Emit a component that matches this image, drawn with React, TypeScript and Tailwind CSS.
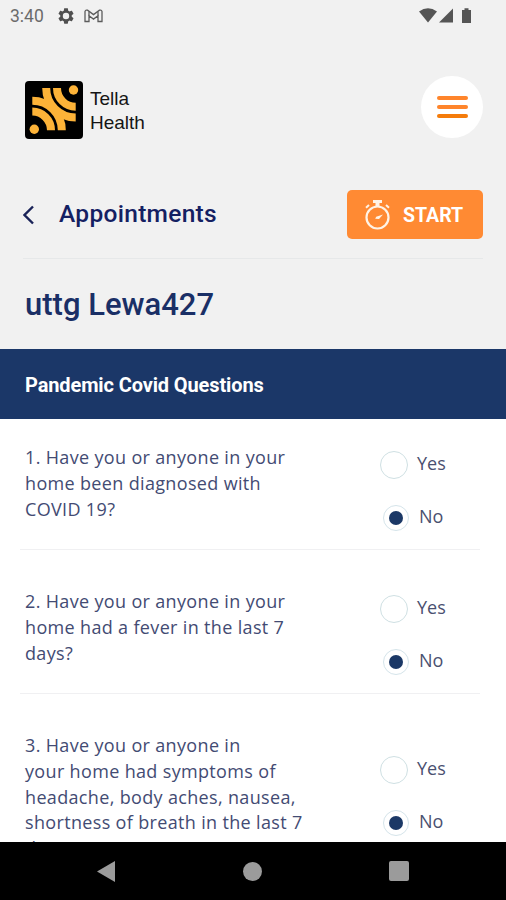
import { useState } from "react";

interface Question {
    id: number;
    lines: string[];
    answersOffset: string;
    height: string;
}

const questions: Question[] = [
    {
        id: 1,
        lines: ["1. Have you or anyone in your", "home been diagnosed with", "COVID 19?"],
        answersOffset: "pt-[31px]",
        height: "h-[131px]"
    },
    {
        id: 2,
        lines: ["2. Have you or anyone in your", "home had a fever in the last 7", "days?"],
        answersOffset: "pt-[44px]",
        height: "h-[144px]"
    },
    {
        id: 3,
        lines: [
            "3. Have you or anyone in",
            "your home had symptoms of",
            "headache, body aches, nausea,",
            "shortness of breath in the last 7",
            "days?"
        ],
        answersOffset: "pt-[61px]",
        height: "h-[220px]"
    }
];

function StatusBar() {
    return (
        <div className="flex h-8 shrink-0 items-center justify-between pl-[10px] pr-[33px] text-[#6b6b6b]">
            <div className="flex items-center">
                <span className="w-[48px] pt-px text-[17.5px] leading-none">3:40</span>
                <svg width="16" height="16" viewBox="2 2 20 20" fill="#505050">
                    <path
                        fillRule="evenodd"
                        d="M19.14 12.94c.04-.3.06-.61.06-.94s-.02-.64-.07-.94l2.03-1.58c.18-.14.23-.41.12-.61l-1.92-3.32c-.12-.22-.37-.29-.59-.22l-2.39.96c-.5-.38-1.03-.7-1.62-.94l-.36-2.54c-.04-.24-.24-.41-.48-.41h-3.84c-.24 0-.43.17-.47.41l-.36 2.54c-.59.24-1.13.57-1.62.94l-2.39-.96c-.22-.08-.47 0-.59.22L2.74 8.87c-.12.21-.08.47.12.61l2.03 1.58c-.05.3-.09.63-.09.94s.02.64.07.94l-2.03 1.58c-.18.14-.23.41-.12.61l1.92 3.32c.12.22.37.29.59.22l2.39-.96c.5.38 1.03.7 1.62.94l.36 2.54c.05.24.24.41.48.41h3.84c.24 0 .44-.17.47-.41l.36-2.54c.59-.24 1.13-.56 1.62-.94l2.39.96c.22.08.47 0 .59-.22l1.92-3.32c.12-.22.07-.47-.12-.61zM12 16a4 4 0 1 1 0-8 4 4 0 0 1 0 8z"
                    />
                </svg>
                <svg className="ml-[10px]" width="19" height="14" viewBox="0 0 19 14" fill="none" stroke="#5c5c5c" strokeWidth="1.3">
                    <path d="M1 12.5V2.500Q1.500.6 3.500 1.200L9.500 5.600l6-4.400Q17.500.6 18 2.500v10h-4V6.700l-4.500 3.400L5 6.700v5.800Z" />
                    <path d="M5 2.500V6.700M14 2.500V6.700" />
                </svg>
            </div>
            <svg width="54" height="16" viewBox="0 0 54 16" fill="#555">
                <path d="M0 3.4Q9 -3 18 3.4L9 14.5Z" />
                <path d="M20 14.5L34 .5v14Z" />
                <path d="M43 2h2.5V.3h4V2H52v13h-9Z" />
            </svg>
        </div>
    );
}

function Logo() {
    return (
        <div className="flex items-center gap-[7px]">
            <svg width="58" height="58" viewBox="0 0 58 58" fill="none">
                <rect width="58" height="58" rx="4" fill="#000" />
                <g stroke="#fdb338" strokeWidth="8">
                    <path d="M32 7A18.7 18.7 0 0 0 50.7 25.7" />
                    <path d="M21.200 7A29.500 29.500 0 0 0 50.700 36.500" />
                    <path d="M7.300 30.600A18.700 18.700 0 0 1 26 49.300" />
                    <path d="M7.300 19.800A29.500 29.500 0 0 1 36.800 49.300" />
                </g>
                <circle cx="48.5" cy="9" r="4.7" fill="#fdb338" />
                <circle cx="9.3" cy="48.3" r="4.7" fill="#fdb338" />
            </svg>
            <div className="pt-[2px] font-['Liberation_Sans'] text-[19px] leading-[24px] text-[#151515]">
                <div>Tella</div>
                <div>Health</div>
            </div>
        </div>
    );
}

function StopwatchIcon() {
    return (
        <svg width="26" height="32" viewBox="0 0 26 32" fill="none" stroke="#fff3e6">
            <circle cx="13.500" cy="18.500" r="11" strokeWidth="2.200" />
            <path d="M9 2.500h9" strokeWidth="3" />
            <path d="M13.500 3v5" strokeWidth="4" />
            <path d="M2 8.800L5 6M22 6l3 2.800" strokeWidth="2" />
            <path d="M19 15.500l-4 4.500-3.800-.2 1-2Z" fill="#fff3e6" stroke="none" />
        </svg>
    );
}

interface AnswerProps {
    label: string;
    checked: boolean;
    onSelect: () => void;
}

function Answer({ label, checked, onSelect }: AnswerProps) {
    return (
        <button
            type="button"
            role="radio"
            aria-checked={checked}
            onClick={onSelect}
            className="flex h-7 items-center text-[18px] text-[#4a5070]"
        >
            {checked ? (
                <span className="ml-[3px] mr-[10px] mt-[2px] flex size-[26px] items-center justify-center rounded-full border border-[#d5e4ea]">
                    <span className="size-[14px] rounded-full bg-[#1b3866]" />
                </span>
            ) : (
                <span className="mr-[9px] mt-px size-[28px] rounded-full border border-[#cfe0e3]" />
            )}
            <span className="pb-[2px] leading-[26px]">{label}</span>
        </button>
    );
}

export default function App() {
    const [answers, setAnswers] = useState<Record<number, string>>({ 1: "No", 2: "No", 3: "No" });

    return (
        <div className="flex h-[900px] w-[506px] flex-col overflow-hidden bg-[#f1f1f1] font-[Roboto,sans-serif]">
            <StatusBar />

            <header className="flex shrink-0 justify-between pl-[25px] pr-[23px] pt-[44px]">
                <div className="pt-[5px]">
                    <Logo />
                </div>
                <button type="button" aria-label="Menu" className="flex size-[62px] flex-col items-center justify-center gap-[5px] rounded-full bg-white">
                    <span className="h-[4px] w-[31px] rounded-full bg-[#ff852b]" />
                    <span className="h-[4px] w-[31px] rounded-full bg-[#ff852b]" />
                    <span className="h-[4px] w-[31px] rounded-full bg-[#f57c0b]" />
                </button>
            </header>

            <div className="mx-[23px] mt-[51px] flex h-[69px] shrink-0 items-start justify-between border-b border-[#e6e8e9]">
                <div className="flex h-[49px] items-center">
                    <svg width="12" height="20" viewBox="0 0 12 20" fill="none" stroke="#1a2358" strokeWidth="2.4">
                        <path d="M10 1.5L1.5 10l8.5 8.5" />
                    </svg>
                    <h1 className="ml-[24px] pb-px text-[24.5px] font-medium tracking-[0.3px] text-[#142062]">Appointments</h1>
                </div>
                <button type="button" className="flex h-[49px] w-[136px] items-center rounded-[5px] bg-[#ff8a33] pl-[17px] text-[19.5px] font-bold text-white">
                    <StopwatchIcon />
                    <span className="ml-[13px] pt-[2px]">START</span>
                </button>
            </div>

            <h2 className="flex h-[90px] shrink-0 items-center pl-[25px] pt-[3px] text-[31px] font-medium text-[#1a2f66]">
                uttg Lewa427
            </h2>

            <div className="flex h-[70px] shrink-0 items-center bg-[#1b3768] pl-[25px] pt-[2px] text-[20px] font-bold tracking-[-0.12px] text-white">
                Pandemic Covid Questions
            </div>

            <main className="min-h-0 flex-1 overflow-hidden bg-white pl-[20px] pr-[26px] font-['Open_Sans',sans-serif]">
                {questions.map((q, i) => (
                    <section key={q.id} className={`flex justify-between border-b border-[#f0f0f2] pl-[5px] ${q.height}`}>
                        <div className={`whitespace-nowrap text-[18px] leading-[25.8px] tracking-[0.34px] text-[#434b73] ${i === 0 ? "pt-[26px]" : "pt-[39px]"}`}>
                            {q.lines.map((line) => (
                                <div key={line}>{line}</div>
                            ))}
                        </div>
                        <div role="radiogroup" className={`flex w-[100px] flex-col gap-[25px] ${q.answersOffset}`}>
                            {["Yes", "No"].map((label) => (
                                <Answer
                                    key={label}
                                    label={label}
                                    checked={answers[q.id] === label}
                                    onSelect={() => setAnswers({ ...answers, [q.id]: label })}
                                />
                            ))}
                        </div>
                    </section>
                ))}
            </main>

            <nav className="flex h-[58px] shrink-0 items-center justify-between bg-black pl-[97px] pr-[97px]">
                <svg width="19" height="21" viewBox="0 0 19 21" fill="#9b9b9b">
                    <path d="M18 0v21L0 10.5Z" />
                </svg>
                <span className="size-[19px] rounded-full bg-[#9b9b9b]" />
                <span className="size-[20px] rounded-[2px] bg-[#9b9b9b]" />
            </nav>
        </div>
    );
}
